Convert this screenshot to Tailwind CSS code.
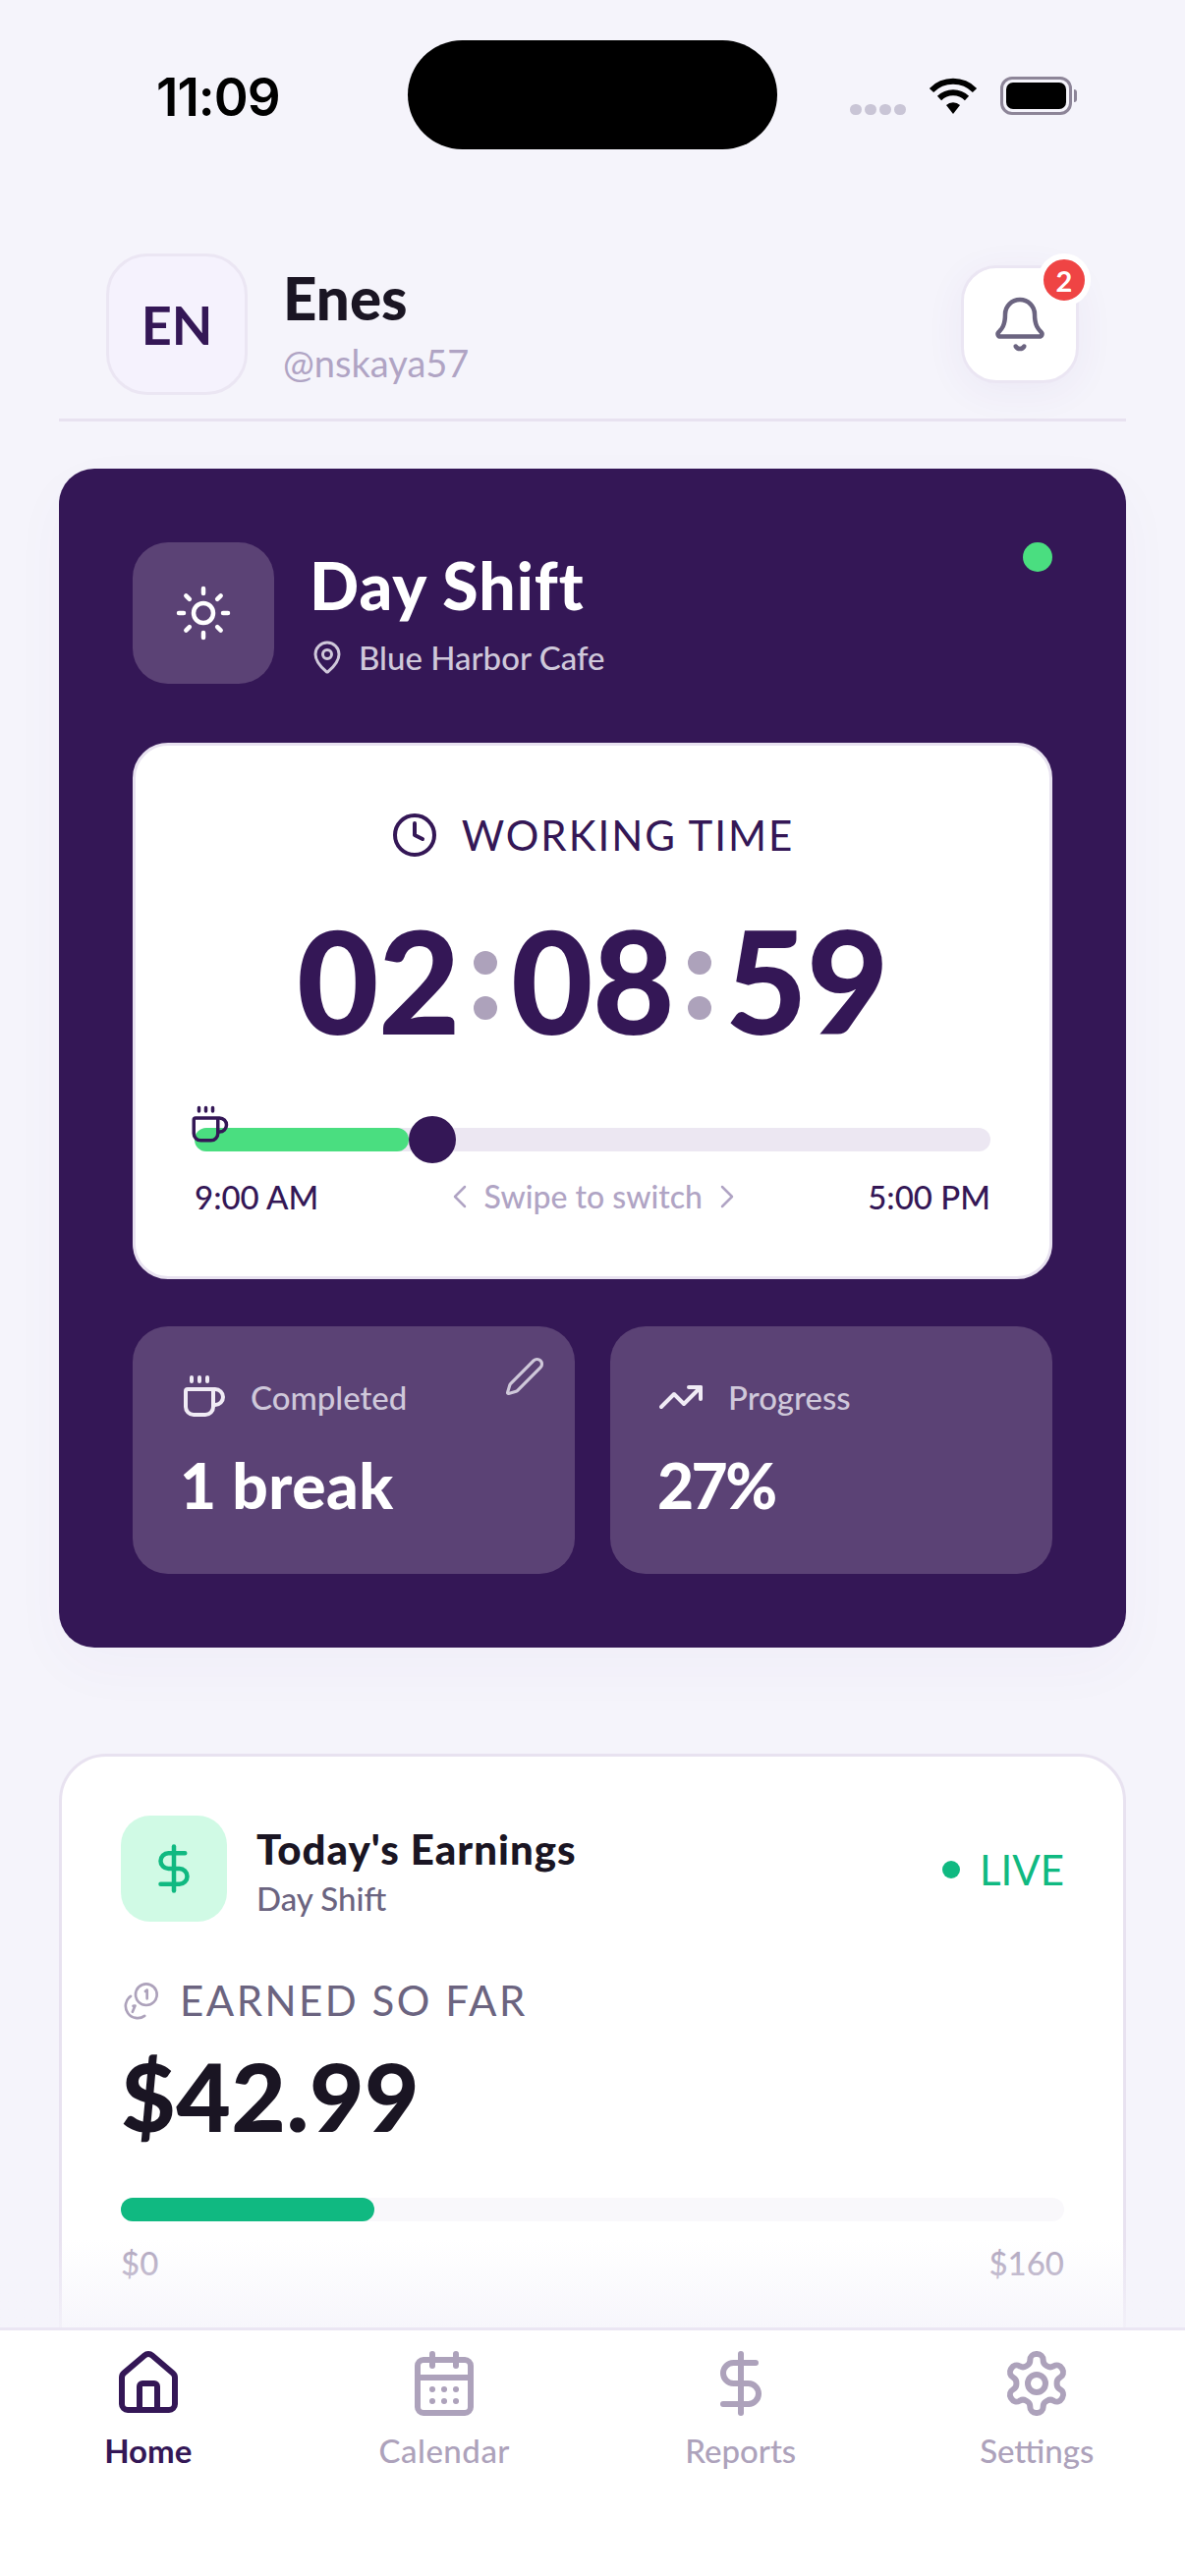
<!doctype html>
<html>

<head>
    <meta charset="UTF-8">
    <meta name="viewport" content="width=device-width, initial-scale=1.0">
    <title>Home</title>
    <script src="https://cdn.jsdelivr.net/npm/@tailwindcss/browser@4"></script>
</head>

<body>
    <div class="relative h-[2622px] w-[1206px] overflow-hidden bg-[#f5f4fb] font-['Lato',sans-serif]">
        <!-- status bar -->
        <div class="flex h-[258px] items-start pt-[41px]">
            <div class="mt-[31px] w-[415px] pl-[159px] font-['Inter',sans-serif] text-[53px] leading-[54px] font-semibold tracking-[-1px] text-black">11:09</div>
            <div class="h-[111px] w-[376px] rounded-full bg-black"></div>
            <div class="ml-[74px] flex items-start">
                <div class="mt-[65px] flex gap-[3px]">
                    <span class="h-[11px] w-[12px] rounded-full bg-[#c9c5d6]"></span>
                    <span class="h-[11px] w-[12px] rounded-full bg-[#c9c5d6]"></span>
                    <span class="h-[11px] w-[12px] rounded-full bg-[#c9c5d6]"></span>
                    <span class="h-[11px] w-[12px] rounded-full bg-[#c9c5d6]"></span>
                </div>
                <svg class="mt-[38px] ml-[23px]" width="50" height="37" viewBox="0 0 50 37" fill="none" stroke="#000" stroke-width="6">
                    <path d="M3 13A31 31 0 0 1 47 13" />
                    <path d="M11 21A20 20 0 0 1 39 21" />
                    <path d="M25 37L18 28A10 10 0 0 1 32 28Z" fill="#000" stroke="none" />
                </svg>
                <div class="mt-[37px] ml-[23px] flex items-center">
                    <div class="flex h-[39px] w-[73px] items-center justify-center rounded-[12px] border-[3px] border-[#8d8598]">
                        <div class="h-[27px] w-[61px] rounded-[7px] bg-black"></div>
                    </div>
                    <div class="ml-[2px] h-[13px] w-[3px] rounded-r-full bg-[#8d8598]"></div>
                </div>
            </div>
        </div>

        <!-- header -->
        <div class="mx-[60px] flex h-[171px] items-start justify-between border-b-[3px] border-[#e8e2f0] px-[48px]">
            <div class="flex items-center gap-[36px]">
                <div class="flex h-[144px] w-[144px] items-center justify-center rounded-[42px] border-[3px] border-[#ebe6f3] bg-[#f5f2fd] text-[54px] font-bold text-[#341756]">EN</div>
                <div class="flex flex-col">
                    <div class="text-[60px] leading-[72px] font-black text-[#1a1523]">Enes</div>
                    <div class="mt-[6px] text-[38px] leading-[48px] text-[#b0a4c4]">@nskaya57</div>
                </div>
            </div>
            <div class="relative mt-[12px] flex h-[120px] w-[120px] items-center justify-center rounded-[36px] border-[3px] border-[#ebe6f3] bg-white shadow-[0_8px_40px_rgba(80,50,160,0.06)]">
                <svg width="60" height="60" viewBox="0 0 24 24" fill="none" stroke="#6b6480" stroke-width="1.8" stroke-linecap="round" stroke-linejoin="round">
                    <path d="M10.268 21a2 2 0 0 0 3.464 0" />
                    <path d="M3.262 15.326A1 1 0 0 0 4 17h16a1 1 0 0 0 .74-1.673C19.41 13.956 18 12.499 18 8A6 6 0 0 0 6 8c0 4.499-1.411 5.956-2.738 7.326" />
                </svg>
                <div class="absolute top-[-15px] right-[-15px] flex h-[54px] w-[54px] items-center justify-center rounded-full border-[6px] border-white bg-[#ef4444] text-[29px] leading-none font-bold text-white">2</div>
            </div>
        </div>

        <!-- shift card -->
        <div class="mx-[60px] mt-[48px] flex h-[1200px] flex-col rounded-[36px] bg-[#341756] px-[75px] pt-[75px] shadow-[0_20px_60px_rgba(80,50,160,0.03)]">
            <div class="flex h-[144px] items-start">
                <div class="flex h-[144px] w-[144px] items-center justify-center rounded-[36px] bg-[#5b4275]">
                    <svg width="60" height="60" viewBox="0 0 24 24" fill="none" stroke="#fff" stroke-width="1.8" stroke-linecap="round" stroke-linejoin="round">
                        <circle cx="12" cy="12" r="4" />
                        <path d="M12 2v2M12 20v2M4.93 4.93l1.41 1.41M17.66 17.66l1.41 1.41M2 12h2M20 12h2M6.34 17.66l-1.41 1.41M19.07 4.93l-1.41 1.41" />
                    </svg>
                </div>
                <div class="ml-[36px] flex flex-col">
                    <div class="mt-[8px] text-[66px] leading-[72px] font-black tracking-[1px] text-white">Day Shift</div>
                    <div class="mt-[17px] flex items-center gap-[14px] text-[#cfc8da]">
                        <svg width="36" height="36" viewBox="0 0 24 24" fill="none" stroke="currentColor" stroke-width="2" stroke-linecap="round" stroke-linejoin="round">
                            <path d="M20 10c0 4.993-5.539 10.193-7.399 11.799a1 1 0 0 1-1.202 0C9.539 20.193 4 14.993 4 10a8 8 0 0 1 16 0" />
                            <circle cx="12" cy="10" r="3" />
                        </svg>
                        <span class="text-[33px] leading-[40px] font-medium">Blue Harbor Cafe</span>
                    </div>
                </div>
                <div class="ml-auto h-[30px] w-[30px] rounded-full bg-[#4ade80]"></div>
            </div>

            <!-- working time -->
            <div class="mt-[60px] flex h-[546px] flex-col rounded-[36px] border-[3px] border-[#e8e2f0] bg-white px-[60px]">
                <div class="mt-[66px] flex items-center justify-center gap-[24px] text-[#341756]">
                    <svg width="48" height="48" viewBox="0 0 24 24" fill="none" stroke="currentColor" stroke-width="2" stroke-linecap="round" stroke-linejoin="round">
                        <circle cx="12" cy="12" r="10" />
                        <polyline points="12 6 12 12 16 14" />
                    </svg>
                    <span class="text-[42px] leading-[50px] tracking-[2px]">WORKING TIME</span>
                </div>
                <div class="mt-[43px] flex items-center justify-center text-[#341756]">
                    <span class="text-[144px] leading-[160px] font-black tracking-[-0.5px]">02</span>
                    <span class="mx-[14px] mt-[10px] flex flex-col gap-[22px]">
                        <span class="h-[24px] w-[24px] rounded-full bg-[#ada2bb]"></span>
                        <span class="h-[24px] w-[24px] rounded-full bg-[#ada2bb]"></span>
                    </span>
                    <span class="text-[144px] leading-[160px] font-black tracking-[-0.5px]">08</span>
                    <span class="mx-[14px] mt-[10px] flex flex-col gap-[22px]">
                        <span class="h-[24px] w-[24px] rounded-full bg-[#ada2bb]"></span>
                        <span class="h-[24px] w-[24px] rounded-full bg-[#ada2bb]"></span>
                    </span>
                    <span class="text-[144px] leading-[160px] font-black tracking-[-0.5px]">59</span>
                </div>
                <div class="relative mt-[70px] h-[24px] rounded-full bg-[#ece7f2]">
                    <div class="h-[24px] w-[218px] rounded-full bg-[#4ade80]"></div>
                    <div class="absolute top-[-12px] left-[218px] h-[48px] w-[48px] rounded-full bg-[#341756]"></div>
                    <svg class="absolute top-[-24px] left-[-6px]" width="42" height="42" viewBox="0 0 24 24" fill="none" stroke="#341756" stroke-width="2" stroke-linecap="round" stroke-linejoin="round">
                        <path d="M10 2v2M14 2v2M6 2v2" />
                        <path d="M16 8a1 1 0 0 1 1 1v8a4 4 0 0 1-4 4H7a4 4 0 0 1-4-4V9a1 1 0 0 1 1-1h14a4 4 0 1 1 0 8h-1" />
                    </svg>
                </div>
                <div class="mt-[26px] flex items-center justify-between text-[33px] leading-[40px] font-medium">
                    <span class="text-[#341756]">9:00 AM</span>
                    <span class="flex items-center gap-[18px] text-[32px] text-[#b0a4c4]">
                        <svg width="14" height="24" viewBox="0 0 14 24" fill="none" stroke="currentColor" stroke-width="2.5" stroke-linecap="round" stroke-linejoin="round"><path d="M12 2L2 12l10 10" /></svg>
                        Swipe to switch
                        <svg width="14" height="24" viewBox="0 0 14 24" fill="none" stroke="currentColor" stroke-width="2.5" stroke-linecap="round" stroke-linejoin="round"><path d="M2 2l10 10L2 22" /></svg>
                    </span>
                    <span class="text-[#341756]">5:00 PM</span>
                </div>
            </div>

            <!-- stat tiles -->
            <div class="mt-[48px] grid grid-cols-2 gap-[36px]">
                <div class="relative h-[252px] rounded-[36px] bg-[#5b4275] px-[48px] pt-[48px]">
                    <div class="flex items-center gap-[24px]">
                        <svg width="48" height="48" viewBox="0 0 24 24" fill="none" stroke="#f0ebf5" stroke-width="2" stroke-linecap="round" stroke-linejoin="round">
                            <path d="M10 2v2M14 2v2M6 2v2" />
                            <path d="M16 8a1 1 0 0 1 1 1v8a4 4 0 0 1-4 4H7a4 4 0 0 1-4-4V9a1 1 0 0 1 1-1h14a4 4 0 1 1 0 8h-1" />
                        </svg>
                        <span class="text-[33px] leading-[48px] font-medium text-[#cfc8da]">Completed</span>
                    </div>
                    <div class="mt-[28px] text-[64px] leading-[76px] font-black tracking-[0.5px] text-white">1 break</div>
                    <svg class="absolute top-[30px] right-[30px]" width="42" height="42" viewBox="0 0 24 24" fill="none" stroke="#cfc8da" stroke-width="1.8" stroke-linecap="round" stroke-linejoin="round">
                        <path d="M21.174 6.812a1 1 0 0 0-3.986-3.987L3.842 16.174a2 2 0 0 0-.5.83l-1.321 4.352a.5.5 0 0 0 .623.622l4.353-1.32a2 2 0 0 0 .83-.497z" />
                    </svg>
                </div>
                <div class="h-[252px] rounded-[36px] bg-[#5b4275] px-[48px] pt-[48px]">
                    <div class="flex items-center gap-[24px]">
                        <svg width="48" height="48" viewBox="0 0 24 24" fill="none" stroke="#f0ebf5" stroke-width="2" stroke-linecap="round" stroke-linejoin="round">
                            <polyline points="22 7 13.5 15.5 8.5 10.5 2 17" />
                            <polyline points="16 7 22 7 22 13" />
                        </svg>
                        <span class="text-[33px] leading-[48px] font-medium text-[#cfc8da]">Progress</span>
                    </div>
                    <div class="mt-[28px] text-[64px] leading-[76px] font-black tracking-[-2.5px] text-white">27%</div>
                </div>
            </div>
        </div>

        <!-- earnings card -->
        <div class="mx-[60px] mt-[108px] h-[800px] rounded-[48px] border-[3px] border-[#e8e2f0] bg-white px-[60px] pt-[60px]">
            <div class="flex items-start">
                <div class="flex h-[108px] w-[108px] items-center justify-center rounded-[30px] bg-[#d0fae5]">
                    <svg width="54" height="54" viewBox="0 0 24 24" fill="none" stroke="#10b981" stroke-width="2" stroke-linecap="round" stroke-linejoin="round">
                        <path d="M12 2v20" />
                        <path d="M17 5H9.5a3.5 3.5 0 0 0 0 7h5a3.5 3.5 0 0 1 0 7H6" />
                    </svg>
                </div>
                <div class="ml-[30px] flex flex-col">
                    <div class="mt-[8px] text-[42px] leading-[52px] font-black tracking-[1px] text-[#1a1523]">Today's Earnings</div>
                    <div class="mt-[4px] text-[33px] leading-[40px] font-medium text-[#6b6480]">Day Shift</div>
                </div>
                <div class="mt-[31px] ml-auto flex items-center gap-[20px] text-[42px] leading-[48px] text-[#10b981]">
                    <span class="h-[18px] w-[18px] rounded-full bg-[#10b981]"></span>
                    LIVE
                </div>
            </div>
            <div class="mt-[55px] flex items-center gap-[20px]">
                <svg width="40" height="40" viewBox="0 0 24 24" fill="none" stroke="#ada2bb" stroke-width="1.6" stroke-linecap="round" stroke-linejoin="round">
                    <circle cx="15.5" cy="8.5" r="6.5" />
                    <path d="M15 6.5l1-.8v5.3" />
                    <path d="M6 9.5a6.5 6.5 0 0 0 8.5 12" />
                    <path d="M7.5 15.5l1.2-.2-1.6 3.8" />
                </svg>
                <span class="text-[42px] leading-[50px] tracking-[2.5px] text-[#6b6480]">EARNED SO FAR</span>
            </div>
            <div class="mt-[16px] text-[96px] leading-[112px] font-black tracking-[0.5px] text-[#1a1523]">$42.99</div>
            <div class="mt-[48px] h-[24px] rounded-full bg-[#f9f8fb]">
                <div class="h-[24px] w-[258px] rounded-full bg-[#10b981]"></div>
            </div>
            <div class="mt-[22px] flex justify-between text-[33px] leading-[40px] font-medium text-[#ada2bb]">
                <span>$0</span>
                <span>$160</span>
            </div>
        </div>

        <!-- fade above the nav -->
        <div class="absolute bottom-[253px] left-0 h-[90px] w-full bg-gradient-to-b from-[#f5f4fb]/0 to-[#f5f4fb]/80"></div>

        <!-- bottom nav -->
        <div class="absolute bottom-0 left-0 grid h-[253px] w-full grid-cols-4 border-t-[3px] border-[#ebe6f3] bg-white pt-[18px] text-[33px] leading-[40px] font-medium text-[#ada2bb]">
            <div class="flex flex-col items-center gap-[12px] font-bold text-[#341756]">
                <svg width="72" height="72" viewBox="0 0 24 24" fill="none" stroke="currentColor" stroke-width="2" stroke-linecap="round" stroke-linejoin="round">
                    <path d="M15 21v-8a1 1 0 0 0-1-1h-4a1 1 0 0 0-1 1v8" />
                    <path d="M3 10a2 2 0 0 1 .709-1.528l7-5.999a2 2 0 0 1 2.582 0l7 5.999A2 2 0 0 1 21 10v9a2 2 0 0 1-2 2H5a2 2 0 0 1-2-2z" />
                </svg>
                <span>Home</span>
            </div>
            <div class="flex flex-col items-center gap-[12px]">
                <svg width="72" height="72" viewBox="0 0 24 24" fill="none" stroke="currentColor" stroke-width="2" stroke-linecap="round" stroke-linejoin="round">
                    <path d="M8 2v4M16 2v4" />
                    <rect x="3" y="4" width="18" height="18" rx="2" />
                    <path d="M3 10h18M8 14h.01M12 14h.01M16 14h.01M8 18h.01M12 18h.01M16 18h.01" />
                </svg>
                <span class="tracking-[0.5px]">Calendar</span>
            </div>
            <div class="flex flex-col items-center gap-[12px]">
                <svg width="72" height="72" viewBox="0 0 24 24" fill="none" stroke="currentColor" stroke-width="2" stroke-linecap="round" stroke-linejoin="round">
                    <path d="M12 2v20" />
                    <path d="M17 5H9.5a3.5 3.5 0 0 0 0 7h5a3.5 3.5 0 0 1 0 7H6" />
                </svg>
                <span>Reports</span>
            </div>
            <div class="flex flex-col items-center gap-[12px]">
                <svg width="72" height="72" viewBox="0 0 24 24" fill="none" stroke="currentColor" stroke-width="2" stroke-linecap="round" stroke-linejoin="round">
                    <path d="M12.22 2h-.44a2 2 0 0 0-2 2v.18a2 2 0 0 1-1 1.73l-.43.25a2 2 0 0 1-2 0l-.15-.08a2 2 0 0 0-2.73.73l-.22.38a2 2 0 0 0 .73 2.73l.15.1a2 2 0 0 1 1 1.72v.51a2 2 0 0 1-1 1.74l-.15.09a2 2 0 0 0-.73 2.73l.22.38a2 2 0 0 0 2.73.73l.15-.08a2 2 0 0 1 2 0l.43.25a2 2 0 0 1 1 1.73V20a2 2 0 0 0 2 2h.44a2 2 0 0 0 2-2v-.18a2 2 0 0 1 1-1.73l.43-.25a2 2 0 0 1 2 0l.15.08a2 2 0 0 0 2.73-.73l.22-.39a2 2 0 0 0-.73-2.73l-.15-.08a2 2 0 0 1-1-1.74v-.5a2 2 0 0 1 1-1.74l.15-.09a2 2 0 0 0 .73-2.73l-.22-.38a2 2 0 0 0-2.73-.73l-.15.08a2 2 0 0 1-2 0l-.43-.25a2 2 0 0 1-1-1.73V4a2 2 0 0 0-2-2z" />
                    <circle cx="12" cy="12" r="3" />
                </svg>
                <span>Settings</span>
            </div>
        </div>
    </div>
</body>

</html>
